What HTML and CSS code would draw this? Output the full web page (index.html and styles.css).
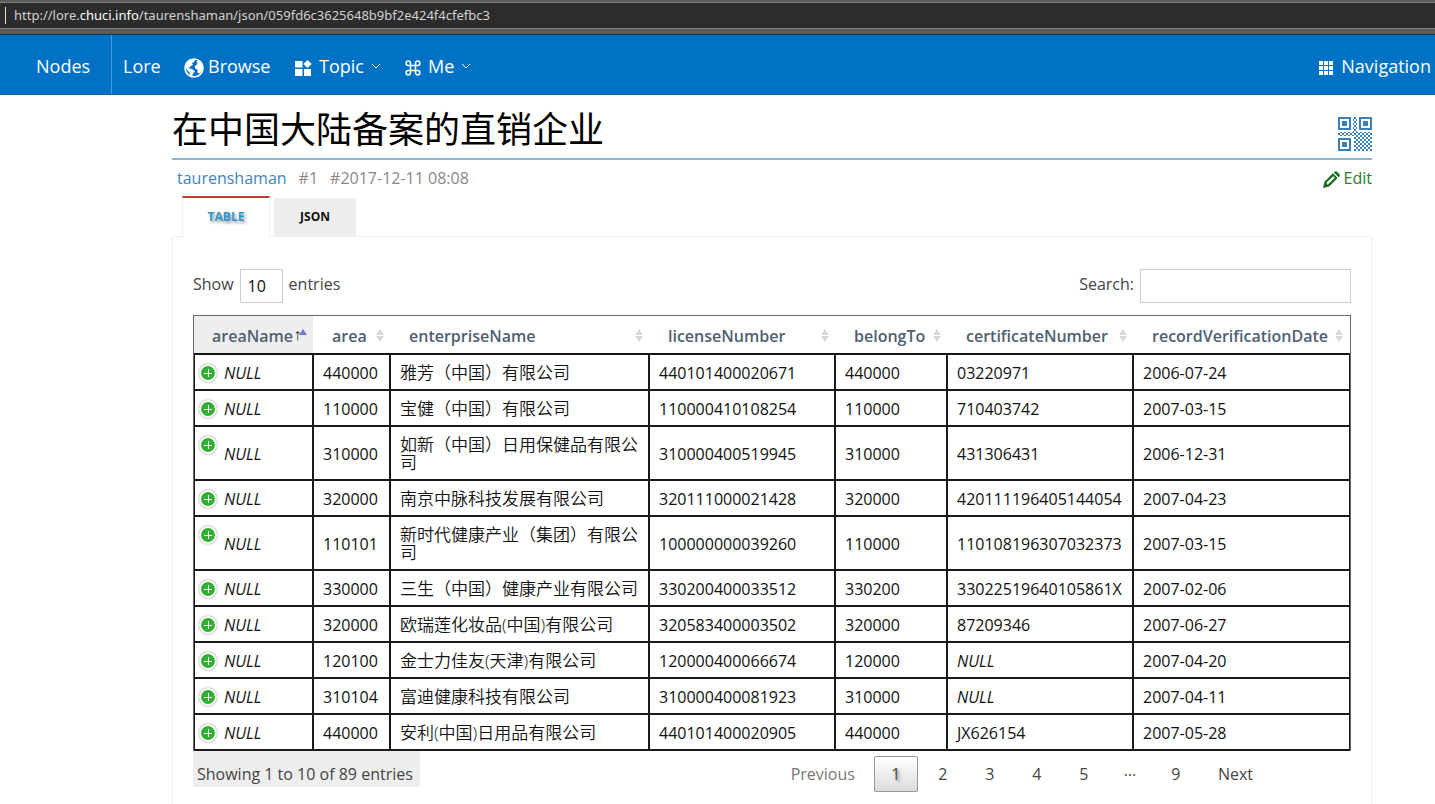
FILE: index.html
```html
<!DOCTYPE html>
<html lang="zh-CN">
<head>
<meta charset="utf-8">
<title>在中国大陆备案的直销企业</title>
<link rel="stylesheet" href="styles.css">
</head>
<body>
<div class="address-bar"><div class="address"><span class="dim">http://lore.</span>chuci.info<span class="dim">/taurenshaman/json/059fd6c3625648b9bf2e424f4cfefbc3</span></div></div>
<nav class="navbar">
  <a class="brand" href="#">Nodes</a>
  <a class="lore" href="#">Lore</a>
  <a class="browse" href="#"><svg class="icon-globe" viewBox="0 0 20 20"><circle cx="10" cy="10" r="9" fill="none" stroke="#fff" stroke-width="1.600"/><path fill="#fff" d="M1.500 8 4 3.500 8 1.500l3 .5-1 2-2 1 1 2-3 1.500-1 2 3 .5 3 2.500-2 2-1 4-2-1-.5-4-3-3zM12.500 3l2-.5 3.500 4 .5 5-3 4-2-1v-3l-2.500-1V8l2.500-2z"/></svg>Browse</a>
  <a class="topic" href="#"><svg class="icon-widgets" viewBox="0 0 17 16"><path fill="#fff" d="M0 1h7.500v6.500H0zM0 9h7.500v7H0zM9 9h7v7H9zM12.500 0l4.200 4-4.200 4-4.200-4z"/></svg>Topic<svg class="icon-chevron" viewBox="0 0 10 6"><path d="m1 1 4 4 4-4"/></svg></a>
  <a class="me" href="#"><svg class="icon-command" viewBox="0 0 16 16"><path d="M5.500 5.500h5v5h-5zM5.500 5.500H3.200A2.200 2.200 0 1 1 5.500 3.200zM10.500 5.500V3.200a2.200 2.200 0 1 1 2.300 2.300zM10.500 10.500h2.300a2.200 2.200 0 1 1-2.300 2.300zM5.500 10.500v2.300a2.200 2.200 0 1 1-2.300-2.300z"/></svg>Me<svg class="icon-chevron" viewBox="0 0 10 6"><path d="m1 1 4 4 4-4"/></svg></a>
  <a class="navigation" href="#"><svg class="icon-grid" viewBox="0 0 14 14"><path fill="#fff" d="M0 0h4v4H0zM5 0h4v4H5zM10 0h4v4h-4zM0 5h4v4H0zM5 5h4v4H5zM10 5h4v4h-4zM0 10h4v4H0zM5 10h4v4H5zM10 10h4v4h-4z"/></svg>Navigation</a>
</nav>
<main class="content">
  <header class="title-row">
    <h1>在中国大陆备案的直销企业</h1>
    <a href="#" aria-label="QR code"><svg class="icon-qr" viewBox="0 0 34 34" shape-rendering="crispEdges"><defs><pattern id="check" width="4" height="4" patternUnits="userSpaceOnUse"><path fill="#3a7fb5" d="M0 0h2v2H0zM2 2h2v2H2z"/></pattern></defs><g fill="none" stroke="#3a7fb5" stroke-width="2"><path d="M1 1h11v11H1zM22 1h11v11H22zM1 22h11v11H1z"/></g><path fill="#3a7fb5" d="M4 4h5v5H4zM25 4h5v5h-5zM4 25h5v5H4z"/><path fill="url(#check)" d="M15 0h4v15h-4zM0 15h16v4H0zM16 15h18v19H16z"/></svg></a>
  </header>
  <div class="meta">
    <a class="author" href="#">taurenshaman</a><span>#1</span><span>#2017-12-11 08:08</span>
    <a class="edit" href="#"><svg class="icon-pencil" viewBox="0 0 18 18"><path fill="#1b6e1f" fill-rule="evenodd" d="M0 18l1.500-6.500L10.500 2.500l5 5L6.500 16.500zM3.500 12.500l1.500 2L12.500 7l-1.500-1.500zM11.500 1.500l1-1q1-.7 2 0l3 3q.7 1 0 2l-1 1z"/></svg>Edit</a>
  </div>
  <div class="tabs" role="tablist">
    <button class="tab active" role="tab" aria-selected="true">TABLE</button>
    <button class="tab" role="tab" aria-selected="false">JSON</button>
  </div>
  <section class="panel">
    <div class="controls">
      <label>Show <select class="length"><option>10</option><option>25</option></select> entries</label>
      <label>Search:<input class="search" type="search"></label>
    </div>
    <table class="records">
      <colgroup><col class="c-name"><col class="c-area"><col class="c-enterprise"><col class="c-license"><col class="c-belong"><col class="c-cert"><col class="c-date"></colgroup>
      <thead><tr>
        <th class="sorted"><div class="head"><span class="label">areaName<span class="arrow">↑</span></span><i class="sort-up"></i></div></th>
        <th><div class="head">area<i class="sort"></i></div></th>
        <th><div class="head">enterpriseName<i class="sort"></i></div></th>
        <th><div class="head">licenseNumber<i class="sort"></i></div></th>
        <th><div class="head">belongTo<i class="sort"></i></div></th>
        <th><div class="head">certificateNumber<i class="sort"></i></div></th>
        <th><div class="head">recordVerificationDate<i class="sort"></i></div></th>
      </tr></thead>
      <tbody>
        <tr><td class="first"><button class="expand" aria-label="Expand"></button><em>NULL</em></td><td>440000</td><td class="cjk">雅芳（中国）有限公司</td><td>440101400020671</td><td>440000</td><td>03220971</td><td>2006-07-24</td></tr>
        <tr><td class="first"><button class="expand" aria-label="Expand"></button><em>NULL</em></td><td>110000</td><td class="cjk">宝健（中国）有限公司</td><td>110000410108254</td><td>110000</td><td>710403742</td><td>2007-03-15</td></tr>
        <tr><td class="first"><button class="expand" aria-label="Expand"></button><em>NULL</em></td><td>310000</td><td class="cjk">如新（中国）日用保健品有限公司</td><td>310000400519945</td><td>310000</td><td>431306431</td><td>2006-12-31</td></tr>
        <tr><td class="first"><button class="expand" aria-label="Expand"></button><em>NULL</em></td><td>320000</td><td class="cjk">南京中脉科技发展有限公司</td><td>320111000021428</td><td>320000</td><td>420111196405144054</td><td>2007-04-23</td></tr>
        <tr><td class="first"><button class="expand" aria-label="Expand"></button><em>NULL</em></td><td>110101</td><td class="cjk">新时代健康产业（集团）有限公司</td><td>100000000039260</td><td>110000</td><td>110108196307032373</td><td>2007-03-15</td></tr>
        <tr><td class="first"><button class="expand" aria-label="Expand"></button><em>NULL</em></td><td>330000</td><td class="cjk">三生（中国）健康产业有限公司</td><td>330200400033512</td><td>330200</td><td>33022519640105861X</td><td>2007-02-06</td></tr>
        <tr><td class="first"><button class="expand" aria-label="Expand"></button><em>NULL</em></td><td>320000</td><td class="cjk">欧瑞莲化妆品(中国)有限公司</td><td>320583400003502</td><td>320000</td><td>87209346</td><td>2007-06-27</td></tr>
        <tr><td class="first"><button class="expand" aria-label="Expand"></button><em>NULL</em></td><td>120100</td><td class="cjk">金士力佳友(天津)有限公司</td><td>120000400066674</td><td>120000</td><td><em>NULL</em></td><td>2007-04-20</td></tr>
        <tr><td class="first"><button class="expand" aria-label="Expand"></button><em>NULL</em></td><td>310104</td><td class="cjk">富迪健康科技有限公司</td><td>310000400081923</td><td>310000</td><td><em>NULL</em></td><td>2007-04-11</td></tr>
        <tr><td class="first"><button class="expand" aria-label="Expand"></button><em>NULL</em></td><td>440000</td><td class="cjk">安利(中国)日用品有限公司</td><td>440101400020905</td><td>440000</td><td>JX626154</td><td>2007-05-28</td></tr>
      </tbody>
    </table>
    <div class="table-footer">
      <div class="info">Showing 1 to 10 of 89 entries</div>
      <div class="pages">
        <button class="previous">Previous</button>
        <button class="page current">1</button>
        <button class="page">2</button>
        <button class="page">3</button>
        <button class="page">4</button>
        <button class="page">5</button>
        <span class="dots">…</span>
        <button class="page">9</button>
        <button class="next">Next</button>
      </div>
    </div>
  </section>
</main>
</body>
</html>
```
FILE: styles.css
```css
* { box-sizing: border-box; }

body {
  display: flex;
  flex-direction: column;
  min-height: 100vh;
  margin: 0;
  background: #fff;
  color: #111;
  font: 400 16px/24px "Open Sans", "Noto Sans", "Noto Sans CJK SC", sans-serif;
}

a { color: inherit; text-decoration: none; }
button, select, input { font: inherit; color: inherit; }
button { padding: 0; border: 0; background: none; }

.address-bar {
  padding: 2px 0 5px;
  border-bottom: 1px solid #0d3558;
  background: #595c58;
}

.address {
  display: flex;
  height: 27px;
  padding-left: 14px;
  border: solid #7b7d7a;
  border-width: 1px 0;
  background: linear-gradient(#ddd, #ddd) 5px 4px / 1px 17px no-repeat #2b2c2b;
  color: #fff;
  font-family: "Noto Sans", sans-serif;
  font-size: 13px;
  line-height: 24px;
}

.dim { color: #d2d2d2; }

.navbar {
  display: flex;
  height: 60px;
  padding-right: 4px;
  border-bottom: 1px solid #0a66ad;
  background: #0072c6;
  color: #fff;
  font-size: 18px;
}

.navbar a { display: flex; align-items: center; padding-top: 3px; }
.navbar .brand { width: 112px; padding-left: 36px; border-right: 1px solid #4a9ad6; }
.lore { width: 72px; padding-left: 11px; }
.browse { width: 111px; gap: 4px; }
.topic { width: 110px; gap: 7px; }
.me { gap: 7px; }
.navigation { margin-left: auto; gap: 8px; }
.navbar svg { flex: none; }
.icon-globe { width: 20px; margin-top: 3px; }
.icon-widgets { width: 17px; margin-top: 4px; }
.icon-command { width: 16px; margin-top: 4px; fill: none; stroke: #fff; stroke-width: 1.5; }
.icon-chevron { width: 10px; fill: none; stroke: #fff; stroke-width: 1; }
.icon-grid { width: 14px; margin-top: 3px; }

.content {
  display: flex;
  flex: 1;
  flex-direction: column;
  margin: 0 63px 0 172px;
}

.title-row {
  display: flex;
  align-items: center;
  justify-content: space-between;
  height: 65px;
  padding-top: 6px;
  border-bottom: 2px solid #8fb5d5;
}

h1 { margin: 0; color: #000; font-size: 36px; font-weight: 400; line-height: 54px; }
.icon-qr { display: block; width: 34px; margin-top: 8px; }

.meta { display: flex; gap: 12px; height: 36px; padding: 6px 0 0 5px; color: #888; }
.author { color: #4284bd; }
.edit { display: flex; align-items: center; gap: 4px; height: 24px; margin-left: auto; color: #2c7a30; }
.icon-pencil { width: 17px; margin-top: 2px; }

.tabs { display: flex; align-items: flex-end; gap: 4px; height: 40px; padding-left: 10px; }
.tab {
  min-width: 82px;
  height: 38px;
  padding: 0 24px;
  background: #eee;
  font-size: 12px;
  font-weight: 700;
}
.tab.active {
  z-index: 1;
  min-width: 88px;
  height: 41px;
  margin-bottom: -1px;
  padding-bottom: 2px;
  border: solid #eee;
  border-width: 2px 1px 0;
  border-top-color: #c0392b;
  background: #fff;
  color: #2f96cf;
  text-shadow: 2px 2px 3px #999;
}

.panel { flex: 1; padding: 32px 20px 12px; border: 1px solid #eee; border-bottom: 0; }
.controls { display: flex; justify-content: space-between; height: 46px; color: #444; }
.controls label { display: flex; align-items: flex-start; gap: 6px; line-height: 30px; }
.length, .search { height: 34px; border: 1px solid #ccc; border-radius: 0; background: #fff; }
.length { width: 43px; padding: 0 7px; appearance: none; color: #111; line-height: 24px; }
.search { width: 211px; padding: 0 8px; }

.records {
  width: 100%;
  border: 1px solid #666;
  border-bottom: 0;
  border-spacing: 0;
  table-layout: fixed;
}
.c-name { width: 120px; }
.c-area { width: 77px; }
.c-license { width: 186px; }
.c-belong { width: 112px; }
.c-cert { width: 186px; }
.c-date { width: 216px; }

th { height: 39px; padding: 2px 7px 0 18px; border-bottom: 2px solid #151515; color: #4f6072; font-weight: 600; text-align: left; }
.sorted { background: linear-gradient(#eee, #eee) 0 0 / 119px 100% no-repeat; }
.head { display: flex; align-items: center; justify-content: space-between; white-space: nowrap; }
.label { display: flex; }
.arrow { color: #223; font-family: "Liberation Mono", monospace; font-weight: 400; }
.sort { display: grid; gap: 1px; }
.sort::before, .sort::after { border: 4px solid transparent; content: ""; }
.sort::before { border-top: 0; border-bottom: 6px solid #d8d8d8; }
.sort::after { border-bottom: 0; border-top: 6px solid #d8d8d8; }
.sort-up { margin: 0 0 8px -8px; border: 4px solid transparent; border-top: 0; border-bottom: 6px solid #7474d0; }

td {
  height: 36px;
  padding: 2px 9px 0;
  border: solid #1a1a1a;
  border-width: 0 2px 2px 0;
  line-height: 18px;
  vertical-align: middle;
}
td:first-child { border-left-width: 1px; }
td:last-child { border-right-width: 1px; }
.cjk { padding: 9px 9px 7px; font-size: 17px; font-weight: 350; }
.first { position: relative; padding-left: 29px; }

.expand {
  position: absolute;
  top: 9px;
  left: 4px;
  width: 18px;
  height: 18px;
  border: 2px solid #fff;
  border-radius: 50%;
  background:
    linear-gradient(#fff, #fff) center / 8px 1px no-repeat,
    linear-gradient(#fff, #fff) center / 1px 8px no-repeat,
    #31b131;
  box-shadow: 0 0 2px #777;
}

.table-footer { display: flex; align-items: flex-start; justify-content: space-between; color: #444; }
.info { min-width: 227px; padding: 11px 4px 1px; background: #eee; }
.pages { display: flex; gap: 3px; padding: 5px 98px 0 0; line-height: 36px; }
.previous { margin-right: 16px; color: #777; }
.page { width: 44px; height: 36px; }
.current { border: 1px solid #979797; border-radius: 2px; background: linear-gradient(#fff, #dcdcdc); text-shadow: 2px 2px 3px #888; line-height: 34px; }
.dots { width: 42px; line-height: 30px; text-align: center; }
.pages .dots { height: 30px; line-height: 28px; }
.next { margin-left: 17px; }
```
